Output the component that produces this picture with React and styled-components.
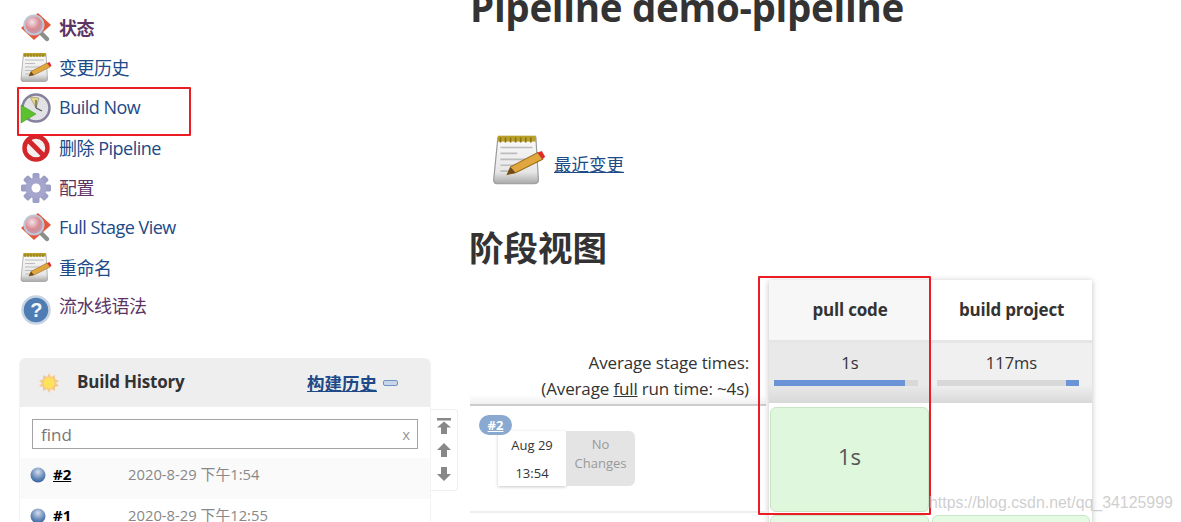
import React from 'react';
import styled, { createGlobalStyle } from 'styled-components';

const Global = createGlobalStyle`
  html, body { margin: 0; padding: 0; background: #fff; }
  body { font-family: "Open Sans", "Noto Sans CJK SC", sans-serif; color: #333; }
`;

const MagnifierIcon = ({ size = 32 }) => (
  <svg width={size} height={size} viewBox="0 0 32 32">
    <defs>
      <radialGradient id="lens" cx="0.4" cy="0.35" r="0.7">
        <stop offset="0" stopColor="#f1e4e8" />
        <stop offset="0.55" stopColor="#d88a94" />
        <stop offset="1" stopColor="#b9a3b8" />
      </radialGradient>
    </defs>
    <path d="M1 16 L18 1 L31 13 L14 28 Z" fill="#e4573a" />
    <path d="M20 20 L27 27" stroke="#8a8f8c" strokeWidth="4.500" strokeLinecap="round" />
    <circle cx="14" cy="13" r="9.500" fill="url(#lens)" stroke="#bcc6d6" strokeWidth="2.200" />
  </svg>
);

const NotepadIcon = ({ size = 32 }) => (
  <svg width={size} height={size} viewBox="0 0 32 32">
    <defs>
      <linearGradient id="padFill" x1="0" y1="0" x2="0" y2="1">
        <stop offset="0" stopColor="#fafafa" />
        <stop offset="0.75" stopColor="#e6e6e6" />
        <stop offset="1" stopColor="#a8a8a8" />
      </linearGradient>
    </defs>
    <path d="M3.500 2 H26 L27.500 27 Q27.500 29.500 25 29.500 H3 Q1 29.500 1 27 Z" fill="url(#padFill)" stroke="#9a9a9a" strokeWidth="0.7" />
    <rect x="3.500" y="1" width="22.500" height="3.500" fill="#b9a02a" />
    <path d="M5 2v3M8 2v3M11 2v3M14 2v3M17 2v3M20 2v3M23 2v3" stroke="#8a7412" strokeWidth="1" />
    <path d="M5 8H24M5 11.500H15M5 15H24M5 18.500H14M5 22H13" stroke="#bcbcbc" strokeWidth="1" />
    <path d="M9 24 L11 19.500 L27 11 L30 15 L14 23 Z" fill="#e0a73e" stroke="#9a6b1c" strokeWidth="0.6" />
    <path d="M27 11 L30 15 L31.500 13.500 L29.500 10 Z" fill="#e22a2a" />
    <path d="M9 24 L11 19.500 L14 23 Z" fill="#6d4a1e" />
  </svg>
);

const BuildIcon = () => (
  <svg width="32" height="32" viewBox="0 0 32 32">
    <circle cx="16" cy="16" r="13.500" fill="#e2e2e6" stroke="#85809c" strokeWidth="2.500" />
    <path d="M16 16 L10 5 L19 6 Z" fill="#e7d58a" stroke="#8f8a5c" strokeWidth="0.6" />
    <path d="M16 16 V8M16 16 L22 19" stroke="#555" strokeWidth="1.200" />
    <path d="M1 13 L16 22 L1 31 Z" fill="#5cc02f" stroke="#4a9a28" strokeWidth="0.6" />
  </svg>
);

const DeleteIcon = () => (
  <svg width="32" height="32" viewBox="0 0 32 32">
    <circle cx="16" cy="16" r="11.500" fill="#f5f0f0" stroke="#d3262b" strokeWidth="4.500" />
    <path d="M8 8 L24 24" stroke="#d3262b" strokeWidth="5" />
  </svg>
);

const GearIcon = () => (
  <svg width="32" height="32" viewBox="0 0 32 32">
    <g fill="#9e9fc6">
      {[0, 45, 90, 135, 180, 225, 270, 315].map(a => (
        <rect key={a} x="12.500" y="1" width="7" height="8" rx="1.500" transform={`rotate(${a} 16 16)`} />
      ))}
    </g>
    <circle cx="16" cy="16" r="10.500" fill="#a5a6cb" />
    <circle cx="16" cy="16" r="4.500" fill="#fff" />
  </svg>
);

const HelpIcon = () => (
  <svg width="32" height="32" viewBox="0 0 32 32">
    <circle cx="16" cy="16" r="13.500" fill="#4f7cb3" stroke="#c6d3e3" strokeWidth="2.500" />
    <text x="16" y="23" textAnchor="middle" fontSize="20" fontWeight="700" fontFamily="Liberation Sans, sans-serif" fill="#f2f5f9">?</text>
  </svg>
);

const SunIcon = () => (
  <svg width="20" height="20" viewBox="0 0 20 20">
    <path d="M10 0 L12 4 L16 2 L16 6 L20 8 L17 10 L20 13 L16 14 L16 18 L12 16 L10 20 L8 16 L4 18 L4 14 L0 13 L3 10 L0 8 L4 6 L4 2 L8 4 Z" fill="#f6c98a" />
    <circle cx="10" cy="10" r="5.500" fill="#fde35a" />
  </svg>
);

const BallIcon = () => (
  <svg width="16" height="16" viewBox="0 0 16 16">
    <defs>
      <radialGradient id="ball" cx="0.5" cy="0.3" r="0.75">
        <stop offset="0" stopColor="#d5deea" />
        <stop offset="0.55" stopColor="#6d8fbd" />
        <stop offset="1" stopColor="#2c5a9a" />
      </radialGradient>
    </defs>
    <circle cx="8" cy="8" r="7.500" fill="url(#ball)" />
  </svg>
);

const ArrowIcon = ({ down, bar }) => (
  <svg width="16" height="16" viewBox="0 0 16 16">
    <g transform={down ? 'rotate(180 8 8)' : undefined} fill="#888">
      {bar && <rect x="1" y="0" width="14" height="2.500" />}
      <path d={bar ? 'M8 3.500 L15 9.500 H11 V16 H5 V9.500 H1 Z' : 'M8 1 L15 8 H11 V15 H5 V8 H1 Z'} />
    </g>
  </svg>
);

const Page = styled.div`
  display: flex;
  width: 1181px;
  height: 522px;
  overflow: hidden;
  position: relative;
`;

const Sidebar = styled.aside`
  width: 470px;
  flex: none;
  padding: 8px 0 0 19px;
  box-sizing: border-box;
`;

const TaskList = styled.nav`
  display: flex;
  flex-direction: column;
  margin-bottom: 30px;
`;

const Task = styled.a`
  display: flex;
  align-items: center;
  gap: 7px;
  height: 40px;
  padding-left: 1px;
  font-size: 18px;
  letter-spacing: -0.5px;
  color: ${p => (p.$visited ? '#5c3566' : '#204a87')};
  font-weight: ${p => (p.$bold ? 700 : 400)};
  cursor: pointer;
`;

const TaskLabel = styled.span`
  transform: translateY(${p => p.$lift ?? -1}px);
`;

const TaskIcon = styled.span`
  display: flex;
  width: 32px;
  height: 32px;
  flex: none;
  transform: translateY(${p => p.$drop || 0}px);
`;

const HistoryRow = styled.div`
  display: flex;
  align-items: flex-start;
`;

const HistoryPanel = styled.section`
  width: 412px;
  flex: none;
  box-sizing: border-box;
  border: 1px solid #f3f3f3;
  border-top: none;
  border-radius: 6px 6px 0 0;
`;

const HistoryHeader = styled.header`
  display: flex;
  align-items: center;
  height: 49px;
  padding: 0 32px 0 19px;
  background: #eee;
  border-radius: 6px 6px 0 0;
`;

const HistoryTitle = styled.h2`
  margin: 0 0 0 18px;
  font-size: 17px;
  font-weight: 700;
  letter-spacing: -0.2px;
  color: #333;
  flex: 1;
  transform: translateY(-1px);
`;

const HistoryLink = styled.a`
  font-size: 17.500px;
  font-weight: 700;
  color: #204a87;
  text-decoration: underline;
`;

const Collapse = styled.span`
  display: block;
  width: 15px;
  height: 6px;
  margin-left: 6px;
  background: #c9d6ea;
  border: 1px solid #6f93c4;
  border-radius: 2px;
  box-sizing: border-box;
`;

const SearchWrap = styled.div`
  display: flex;
  align-items: center;
  height: 30px;
  margin: 12px 12px 9px;
  padding: 0 7px 0 8px;
  border: 1px solid #a3a3a3;
  box-sizing: border-box;
  font-size: 17px;
  color: #777;
`;

const SearchText = styled.span`
  flex: 1;
`;

const SearchClear = styled.span`
  font-size: 15px;
  color: #999;
`;

const BuildRow = styled.div`
  display: flex;
  align-items: center;
  height: 41px;
  padding: 0 0 7px 10px;
  box-sizing: border-box;
  background: ${p => (p.$shaded ? '#fafafa' : '#fff')};
`;

const BuildLink = styled.a`
  width: 75px;
  margin: -3px 0 0 7px;
  font-size: 15px;
  font-weight: 700;
  color: #000;
  text-decoration: ${p => (p.$current ? 'underline' : 'none')};
`;

const BuildTime = styled.span`
  margin-top: -3px;
  font-size: 14.800px;
  color: #888;
`;

const PageControls = styled.div`
  display: flex;
  flex-direction: column;
  align-items: center;
  gap: 8px;
  width: 27px;
  height: 82px;
  margin-top: 51px;
  padding-top: 8px;
  box-sizing: border-box;
  border: 1px solid #eee;
  border-left: none;
  border-radius: 0 4px 4px 0;
`;

const Main = styled.main`
  flex: 1;
  min-width: 0;
`;

const Title = styled.h1`
  margin: -19px 0 0;
  font-size: 38.500px;
  line-height: 53px;
  font-weight: 700;
  white-space: nowrap;
  letter-spacing: -0.3px;
  color: #333;
`;

const RecentChanges = styled.div`
  display: flex;
  align-items: center;
  gap: 8px;
  margin: 100px 0 0 22px;
`;

const RecentLink = styled.a`
  margin-top: 5px;
  font-size: 17.500px;
  color: #204a87;
  text-decoration: underline;
`;

const SectionTitle = styled.h2`
  margin: 38px 0 10px -1px;
  font-size: 34.500px;
  line-height: 44px;
  font-weight: 700;
  color: #333;
`;

const Stage = styled.div`
  display: flex;
  align-items: flex-start;
`;

const Labels = styled.div`
  width: 299px;
  flex: none;
`;

const Columns = styled.div`
  width: 323px;
  flex: none;
  box-shadow: 0 1px 6px rgba(0, 0, 0, 0.25);
`;

const ColumnsRow = styled.div`
  display: grid;
  grid-template-columns: 162px 161px;
  height: ${p => p.$height}px;
`;

const Head = styled.div`
  display: flex;
  align-items: center;
  justify-content: center;
  padding-bottom: 2px;
  font-size: 17px;
  font-weight: 700;
  letter-spacing: -0.2px;
  color: #333;
  background: ${p => (p.$shaded ? '#f7f7f7' : '#fff')};
  border-bottom: 3px solid #e6e6e6;
`;

const Average = styled.div`
  padding-top: 8px;
  text-align: center;
  font-size: 16.500px;
  line-height: 24px;
  color: #333;
  background: linear-gradient(to bottom, ${p => (p.$shaded ? '#e9e9e9' : '#f0f0f0')} 70%, #d8d8d8);
  margin-bottom: 3px;
  box-sizing: border-box;
`;

const Bar = styled.div`
  position: relative;
  height: 6px;
  margin: 5px 13px 0 ${p => p.$left}px;
  background: #d8d8d8;
`;

const BarFill = styled.div`
  position: absolute;
  top: 0;
  bottom: 0;
  background: #6a94d6;
`;

const Cell = styled.div`
  display: flex;
  align-items: center;
  justify-content: center;
  padding-bottom: 7px;
  margin: ${p => p.$margin || '1px 2px 1px 1px'};
  border: 1px solid ${p => p.$border || '#c8e6c5'};
  border-radius: 6px;
  background: ${p => p.$color || '#dff7dd'};
  font-size: 22px;
  color: #555;
`;

const EmptyCell = styled.div`
  background: #fff;
`;

const LabelHead = styled.div`
  height: 60px;
`;

const AverageLabel = styled.div`
  height: 66px;
  padding-right: 17px;
  padding-top: 10px;
  box-sizing: border-box;
  text-align: right;
  font-size: 17px;
  line-height: 26px;
  letter-spacing: -0.15px;
  color: #333;
  background: linear-gradient(to bottom, #fff 85%, #f0f0f0);
  border-bottom: 2px solid #ccc;
  margin-right: 3px;
  white-space: nowrap;

  a { color: #333; text-decoration: underline; }
`;

const RunRow = styled.div`
  position: relative;
  display: flex;
  align-items: flex-start;
  height: 107px;
  padding: 25px 0 0 28px;
  box-sizing: border-box;
  border-bottom: 2px solid #eee;
  margin-right: 3px;
`;

const RunBadge = styled.a`
  position: absolute;
  top: 9px;
  left: 9px;
  width: 33px;
  height: 20px;
  border-radius: 10px;
  background: #8aa9d0;
  text-align: center;
  font-size: 13px;
  line-height: 20px;
  font-weight: 700;
  color: #fff;
  text-decoration: underline;
`;

const RunDate = styled.div`
  display: flex;
  flex-direction: column;
  align-items: center;
  justify-content: space-between;
  width: 68px;
  height: 55px;
  padding: 5px 0 4px;
  box-sizing: border-box;
  background: #fff;
  box-shadow: 0 1px 3px rgba(0, 0, 0, 0.22);
  font-size: 13px;
  color: #333;
`;

const RunChanges = styled.div`
  display: flex;
  align-items: flex-start;
  justify-content: center;
  width: 69px;
  height: 55px;
  padding-top: 4px;
  box-sizing: border-box;
  background: #e4e4e4;
  border-radius: 0 6px 6px 0;
  text-align: center;
  font-size: 13px;
  line-height: 19px;
  color: #999;
`;

const Highlight = styled.div`
  position: absolute;
  left: ${p => p.$x}px;
  top: ${p => p.$y}px;
  width: ${p => p.$w}px;
  height: ${p => p.$h}px;
  box-sizing: border-box;
  border: 2px solid #ec1c24;
  border-radius: 1px;
  pointer-events: none;
`;

const Watermark = styled.div`
  position: absolute;
  left: 929px;
  top: 494px;
  font-family: "Liberation Sans", sans-serif;
  font-size: 15.900px;
  color: rgba(190, 190, 190, 0.75);
  white-space: nowrap;
`;

const tasks = [
  { label: '状态', icon: <MagnifierIcon />, visited: true, bold: true },
  { label: '变更历史', icon: <NotepadIcon /> },
  { label: 'Build Now', icon: <BuildIcon /> },
  { label: '删除 Pipeline', icon: <DeleteIcon /> },
  { label: '配置', icon: <GearIcon />, visited: true },
  { label: 'Full Stage View', icon: <MagnifierIcon /> },
  { label: '重命名', icon: <NotepadIcon /> },
  { label: '流水线语法', icon: <HelpIcon />, visited: true, lift: -3, drop: 2 },
];

export default function App() {
  return (
    <Page>
      <Global />
      <Sidebar>
        <TaskList>
          {tasks.map(t => (
            <Task key={t.label} $visited={t.visited} $bold={t.bold}>
              <TaskIcon $drop={t.drop}>{t.icon}</TaskIcon>
              <TaskLabel $lift={t.lift}>{t.label}</TaskLabel>
            </Task>
          ))}
        </TaskList>
        <HistoryRow>
          <HistoryPanel>
            <HistoryHeader>
              <SunIcon />
              <HistoryTitle>Build History</HistoryTitle>
              <HistoryLink>构建历史</HistoryLink>
              <Collapse />
            </HistoryHeader>
            <SearchWrap>
              <SearchText>find</SearchText>
              <SearchClear>x</SearchClear>
            </SearchWrap>
            <BuildRow $shaded>
              <BallIcon />
              <BuildLink $current>#2</BuildLink>
              <BuildTime>2020-8-29 下午1:54</BuildTime>
            </BuildRow>
            <BuildRow>
              <BallIcon />
              <BuildLink>#1</BuildLink>
              <BuildTime>2020-8-29 下午12:55</BuildTime>
            </BuildRow>
          </HistoryPanel>
          <PageControls>
            <ArrowIcon bar />
            <ArrowIcon />
            <ArrowIcon down />
          </PageControls>
        </HistoryRow>
      </Sidebar>
      <Main>
        <Title>Pipeline demo-pipeline</Title>
        <RecentChanges>
          <NotepadIcon size={54} />
          <RecentLink>最近变更</RecentLink>
        </RecentChanges>
        <SectionTitle>阶段视图</SectionTitle>
        <Stage>
          <Labels>
            <LabelHead />
            <AverageLabel>
              Average stage times:
              <br />
              (Average <a>full</a> run time: ~4s)
            </AverageLabel>
            <RunRow>
              <RunBadge>#2</RunBadge>
              <RunDate>
                <span>Aug 29</span>
                <span>13:54</span>
              </RunDate>
              <RunChanges>
                No
                <br />
                Changes
              </RunChanges>
            </RunRow>
          </Labels>
          <Columns>
            <ColumnsRow $height={63}>
              <Head $shaded>pull code</Head>
              <Head>build project</Head>
            </ColumnsRow>
            <ColumnsRow $height={63}>
              <Average $shaded>
                1s
                <Bar $left={5}>
                  <BarFill style={{ left: 0, width: '91%' }} />
                </Bar>
              </Average>
              <Average>
                117ms
                <Bar $left={6}>
                  <BarFill style={{ right: 0, width: '9%' }} />
                </Bar>
              </Average>
            </ColumnsRow>
            <ColumnsRow $height={107}>
              <Cell>1s</Cell>
              <EmptyCell />
            </ColumnsRow>
            <ColumnsRow $height={40}>
              <Cell $color="#e4fae2" $margin="2px 2px 0 1px" />
              <Cell $color="#e4fae2" $margin="2px 2px 0 1px" />
            </ColumnsRow>
          </Columns>
        </Stage>
      </Main>
      <Highlight $x={17} $y={87} $w={174} $h={49} />
      <Highlight $x={758} $y={276} $w={173} $h={239} />
      <Watermark>https://blog.csdn.net/qq_34125999</Watermark>
    </Page>
  );
}
